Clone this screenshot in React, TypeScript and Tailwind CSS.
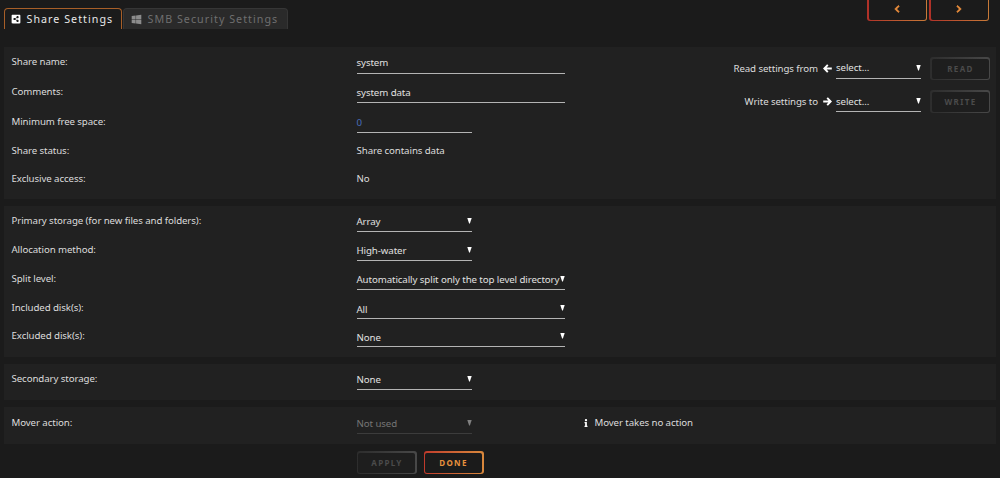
import React from 'react';
import { FaChevronLeft, FaChevronRight, FaInfo, FaShareAltSquare, FaWindows } from 'react-icons/fa';

type FieldProps = {
    value: string;
    width: string;
    select?: boolean;
    disabled?: boolean;
    color?: string;
    pad?: string;
};

const Field: React.FC<FieldProps> = ({ value, width, select, disabled, color = 'text-[#e0e0e0]', pad = 'pt-[2px]' }) => (
    <div className={`relative flex h-[22px] items-center border-b whitespace-nowrap ${width} ${pad} ${disabled ? 'border-[#3c3c3c] text-[#757575]' : `border-[#b4b4b4] ${color}`}`}>
        <span>{value}</span>
        {select && (
            <svg viewBox="0 0 5 6" className={`absolute right-0 top-[8px] h-[6px] w-[5px] ${disabled ? 'text-[#808080]' : 'text-white'}`} fill="currentColor">
                <path d="M.3 0h4.4L2.9 5.4h-.8z" />
            </svg>
        )}
    </div>
);

const Row: React.FC<{ label: string; height: string; leading?: string; children: React.ReactNode }> = ({ label, height, leading = 'leading-[22px]', children }) => (
    <div className={`flex items-start ${leading} ${height}`}>
        <div className="w-[345px] shrink-0">{label}</div>
        {children}
    </div>
);

// Left arrow, mirrored for the right one
const Arrow: React.FC<{ className?: string }> = ({ className = '' }) => (
    <svg viewBox="0 0 9 9" className={`h-[9px] w-[9px] ${className}`} fill="none" stroke="currentColor" strokeWidth="1.9">
        <path d="M4.8 .9L1.3 4.5l3.5 3.6M1.6 4.5H8.8" />
    </svg>
);

const GhostButton: React.FC<{ children: React.ReactNode }> = ({ children }) => (
    <button disabled className="h-[23px] w-[60px] rounded-[3px] bg-gradient-to-r from-[#2d2d2d] to-[#484848] p-[1.5px]">
        <span className="flex h-full w-full items-center justify-center rounded-[2px] bg-[#1e1e1e] pl-px text-[8px] font-bold tracking-[1.35px] text-[#4b4b4b]">{children}</span>
    </button>
);

const NavButton: React.FC<{ children: React.ReactNode }> = ({ children }) => (
    <button className="h-[21px] w-[60px] rounded-b-[3px] bg-gradient-to-r from-[#b03028] to-[#c87a38] px-[1.5px] pb-[1.5px]">
        <span className="flex h-full w-full items-center justify-center rounded-b-[2px] bg-[#1b1b1b] pb-px text-[8px] text-[#f0913e] [&_svg]:stroke-current [&_svg]:stroke-[50]">{children}</span>
    </button>
);

const Transfer: React.FC<{ label: string; icon: React.ReactNode; action: string; pad: string }> = ({ label, icon, action, pad }) => (
    <div className="flex h-[33px] items-start justify-end">
        <span className="leading-[23px]">{label}</span>
        <span className="mr-[4px] ml-[5px] flex h-[22px] items-center pt-px text-white">{icon}</span>
        <Field value="select..." width="w-[85px]" pad={pad} select />
        <div className="ml-[9px]">
            <GhostButton>{action}</GhostButton>
        </div>
    </div>
);

export default function App() {
    return (
        <div className="h-[478px] w-[1000px] overflow-hidden bg-[#1b1b1b] pr-[4px] pl-[3.5px] font-['Noto_Sans',sans-serif] text-[9.7px] tracking-[-0.09px] text-[#dcdcdc]">
            {/* Tabs and previous / next share */}
            <div className="flex h-[47px] items-start justify-between">
                <div className="flex gap-[1px] pt-[8px] text-[10.7px] tracking-[1.04px]">
                    <div className="flex h-[21px] w-[118px] items-center gap-[6px] rounded-t-[4px] border border-b-0 border-[#a85f28] pl-[6px] text-[#e8e8e8]">
                        <FaShareAltSquare className="size-[10px] shrink-0 text-white" />
                        <span className="whitespace-nowrap">Share Settings</span>
                    </div>
                    <div className="flex h-[21px] w-[165px] items-center gap-[6px] rounded-t-[4px] border border-b-0 border-[#363636] bg-[#2a2a2a] pl-[7px] text-[#6f6f6f]">
                        <FaWindows className="size-[11px] shrink-0 text-[#8c8c8c]" />
                        <span className="whitespace-nowrap">SMB Security Settings</span>
                    </div>
                </div>
                <div className="mr-[7px] flex gap-[2px]">
                    <NavButton><FaChevronLeft /></NavButton>
                    <NavButton><FaChevronRight /></NavButton>
                </div>
            </div>

            {/* Share details */}
            <section className="flex h-[152px] justify-between bg-[#212121] pt-[5px] pr-[6px] pl-[8px]">
                <div>
                    <Row label="Share name:" height="h-[29px]" leading="leading-[20px]"><Field value="system" width="w-[208px]" pad="pt-px" /></Row>
                    <Row label="Comments:" height="h-[30px]"><Field value="system data" width="w-[208px]" /></Row>
                    <Row label="Minimum free space:" height="h-[30px]" leading="leading-[21px]"><Field value="0" width="w-[115px]" color="text-[#486dba]" /></Row>
                    <Row label="Share status:" height="h-[28px]" leading="leading-[20px]"><span>Share contains data</span></Row>
                    <Row label="Exclusive access:" height="h-[28px]" leading="leading-[20px]"><span>No</span></Row>
                </div>
                <div className="pt-[5px]">
                    <Transfer label="Read settings from" icon={<Arrow />} action="READ" pad="pt-[2px]" />
                    <Transfer label="Write settings to" icon={<Arrow className="-scale-x-100" />} action="WRITE" pad="pt-[4px]" />
                </div>
            </section>

            {/* Primary storage */}
            <section className="mt-[7px] h-[151px] bg-[#212121] pt-[4px] pl-[8px]">
                <Row label="Primary storage (for new files and folders):" height="h-[29px]"><Field value="Array" width="w-[115px]" select /></Row>
                <Row label="Allocation method:" height="h-[29px]"><Field value="High-water" width="w-[115px]" select /></Row>
                <Row label="Split level:" height="h-[29px]"><Field value="Automatically split only the top level directory" width="w-[208px]" select /></Row>
                <Row label="Included disk(s):" height="h-[28px]"><Field value="All" width="w-[208px]" pad="pt-[4px]" select /></Row>
                <Row label="Excluded disk(s):" height="h-[28px]"><Field value="None" width="w-[208px]" pad="pt-[4px]" select /></Row>
            </section>

            <section className="mt-[7px] h-[36px] bg-[#212121] pt-[4px] pl-[8px]">
                <Row label="Secondary storage:" height="h-[28px]"><Field value="None" width="w-[115px]" select /></Row>
            </section>

            <section className="mt-[7px] h-[37px] bg-[#212121] pt-[5px] pl-[8px]">
                <Row label="Mover action:" height="h-[28px]">
                    <Field value="Not used" width="w-[115px]" select disabled />
                    <span className="ml-[110px] flex h-[22px] items-center gap-[5px]">
                        <FaInfo className="size-[8px] text-white" />
                        Mover takes no action
                    </span>
                </Row>
            </section>

            <div className="flex gap-[7px] pt-[7px] pl-[353px]">
                <GhostButton>APPLY</GhostButton>
                <button className="h-[23px] w-[60px] rounded-[3px] bg-gradient-to-r from-[#c03a2c] to-[#d8883c] p-[1.5px]">
                    <span className="flex h-full w-full items-center justify-center rounded-[2px] bg-[#1b1b1b] text-[8px] font-bold tracking-[1.35px] text-[#e8913e]">DONE</span>
                </button>
            </div>
        </div>
    );
}
